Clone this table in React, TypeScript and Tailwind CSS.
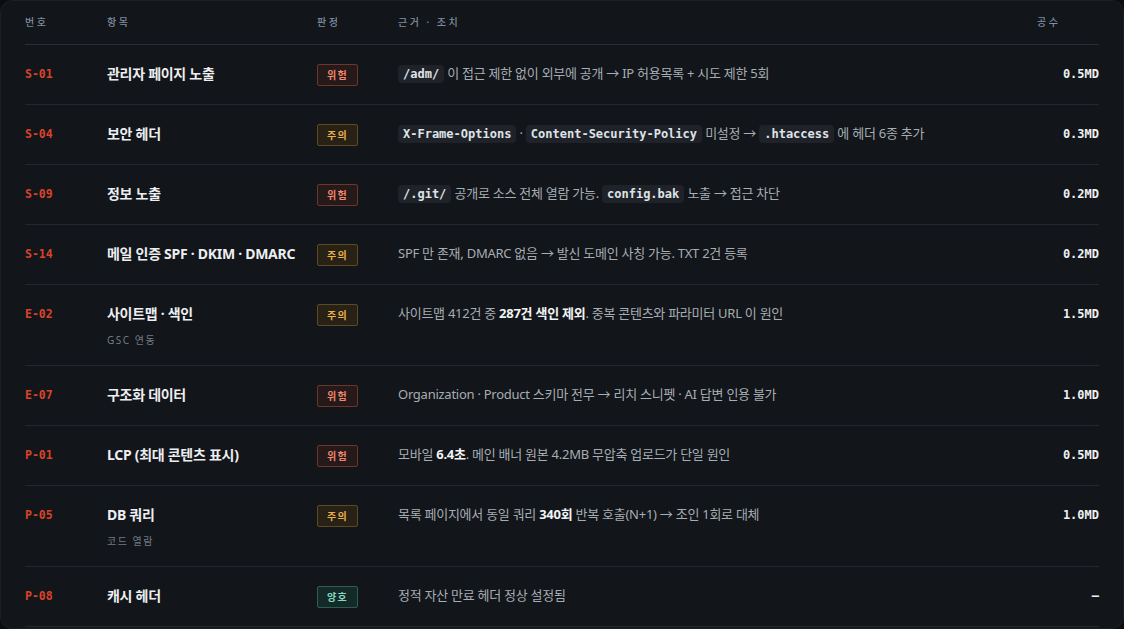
import React from 'react'

type Verdict = 'risk' | 'warn' | 'ok'

type Part = string | { code: string } | { b: string }

type Row = {
  id: string
  title: string
  sub?: string
  verdict: Verdict
  parts: Part[]
  effort: string
}

const rows: Row[] = [
  {
    id: 'S-01',
    title: '관리자 페이지 노출',
    verdict: 'risk',
    parts: [{ code: '/adm/' }, ' 이 접근 제한 없이 외부에 공개 → IP 허용목록 + 시도 제한 5회'],
    effort: '0.5MD',
  },
  {
    id: 'S-04',
    title: '보안 헤더',
    verdict: 'warn',
    parts: [
      { code: 'X-Frame-Options' },
      ' · ',
      { code: 'Content-Security-Policy' },
      ' 미설정 → ',
      { code: '.htaccess' },
      ' 에 헤더 6종 추가',
    ],
    effort: '0.3MD',
  },
  {
    id: 'S-09',
    title: '정보 노출',
    verdict: 'risk',
    parts: [{ code: '/.git/' }, ' 공개로 소스 전체 열람 가능. ', { code: 'config.bak' }, ' 노출 → 접근 차단'],
    effort: '0.2MD',
  },
  {
    id: 'S-14',
    title: '메일 인증 SPF · DKIM · DMARC',
    verdict: 'warn',
    parts: ['SPF 만 존재, DMARC 없음 → 발신 도메인 사칭 가능. TXT 2건 등록'],
    effort: '0.2MD',
  },
  {
    id: 'E-02',
    title: '사이트맵 · 색인',
    sub: 'GSC 연동',
    verdict: 'warn',
    parts: ['사이트맵 412건 중 ', { b: '287건 색인 제외' }, '. 중복 콘텐츠와 파라미터 URL 이 원인'],
    effort: '1.5MD',
  },
  {
    id: 'E-07',
    title: '구조화 데이터',
    verdict: 'risk',
    parts: ['Organization · Product 스키마 전무 → 리치 스니펫 · AI 답변 인용 불가'],
    effort: '1.0MD',
  },
  {
    id: 'P-01',
    title: 'LCP (최대 콘텐츠 표시)',
    verdict: 'risk',
    parts: ['모바일 ', { b: '6.4초' }, '. 메인 배너 원본 4.2MB 무압축 업로드가 단일 원인'],
    effort: '0.5MD',
  },
  {
    id: 'P-05',
    title: 'DB 쿼리',
    sub: '코드 열람',
    verdict: 'warn',
    parts: ['목록 페이지에서 동일 쿼리 ', { b: '340회' }, ' 반복 호출(N+1) → 조인 1회로 대체'],
    effort: '1.0MD',
  },
  {
    id: 'P-08',
    title: '캐시 헤더',
    verdict: 'ok',
    parts: ['정적 자산 만료 헤더 정상 설정됨'],
    effort: '–',
  },
]

const mono = "font-['DejaVu_Sans_Mono','Liberation_Mono',monospace]"
const sans = "font-['Noto_Sans','Noto_Sans_CJK_KR',sans-serif]"

function Badge({ verdict }: { verdict: Verdict }) {
  if (verdict === 'risk') {
    return (
      <span className="flex h-[22px] w-[41px] items-center justify-center rounded-[2px] border border-[#6e3529] bg-[#26191a] text-[10px] font-bold tracking-[0.12em] text-[#f0876a]">
        위험
      </span>
    )
  }
  if (verdict === 'warn') {
    return (
      <span className="flex h-[22px] w-[41px] items-center justify-center rounded-[2px] border border-[#5e4a1f] bg-[#272116] text-[10px] font-bold tracking-[0.12em] text-[#eab04a]">
        주의
      </span>
    )
  }
  return (
    <span className="flex h-[22px] w-[41px] items-center justify-center rounded-[2px] border border-[#2b5e54] bg-[#142a27] text-[10px] font-bold tracking-[0.12em] text-[#86d8c2]">
      양호
    </span>
  )
}

function Detail({ parts }: { parts: Part[] }) {
  return (
    <div className="flex h-[22px] items-center text-[13px] tracking-[-0.02em] whitespace-pre text-[#a7adb4]">
      {parts.map((p, i) => {
        if (typeof p === 'string') return <span key={i}>{p}</span>
        if ('code' in p)
          return (
            <code
              key={i}
              className={`${mono} rounded-[4px] bg-[#1f2329] px-[5px] text-[12px] leading-[18px] font-semibold tracking-normal text-[#dfe3e8]`}
            >
              {p.code}
            </code>
          )
        return (
          <b key={i} className="font-bold text-[#f1f3f5]">
            {p.b}
          </b>
        )
      })}
    </div>
  )
}

export default function App() {
  return (
    <div className={`${sans} h-screen overflow-hidden bg-[#0b0d10]`}>
      <div className="h-[629px] overflow-hidden rounded-[12px] border border-[#1b1f24] bg-[#121519] px-6">
        {/* header */}
        <div className="grid h-[44px] grid-cols-[82px_210px_81px_1fr_62px] items-center border-b border-[#2a2e34] text-[10px] font-medium tracking-[0.25em] text-[#7e8da0]">
          <div>번호</div>
          <div>항목</div>
          <div>판정</div>
          <div>근거 · 조치</div>
          <div>공수</div>
        </div>

        {rows.map((r) => (
          <div
            key={r.id}
            className={`grid grid-cols-[82px_210px_81px_1fr_62px] items-start border-b border-[#24282e] pt-[18px] ${
              r.sub ? 'h-[81px]' : 'h-[60px]'
            }`}
          >
            <div className={`${mono} h-[22px] text-[11.5px] leading-[22px] font-bold text-[#d9432a]`}>{r.id}</div>
            <div>
              <div className="h-[22px] text-[14px] leading-[22px] font-bold tracking-[-0.02em] text-[#eceef1]">
                {r.title}
              </div>
              {r.sub && (
                <div className="mt-[7px] h-[16px] text-[10px] leading-[16px] tracking-[0.15em] text-[#737b85]">
                  {r.sub}
                </div>
              )}
            </div>
            <div className="pt-[1px]">
              <Badge verdict={r.verdict} />
            </div>
            <Detail parts={r.parts} />
            <div className={`${mono} h-[22px] text-right text-[12px] leading-[22px] font-bold text-[#eef0f2]`}>
              {r.effort}
            </div>
          </div>
        ))}
      </div>
    </div>
  )
}
